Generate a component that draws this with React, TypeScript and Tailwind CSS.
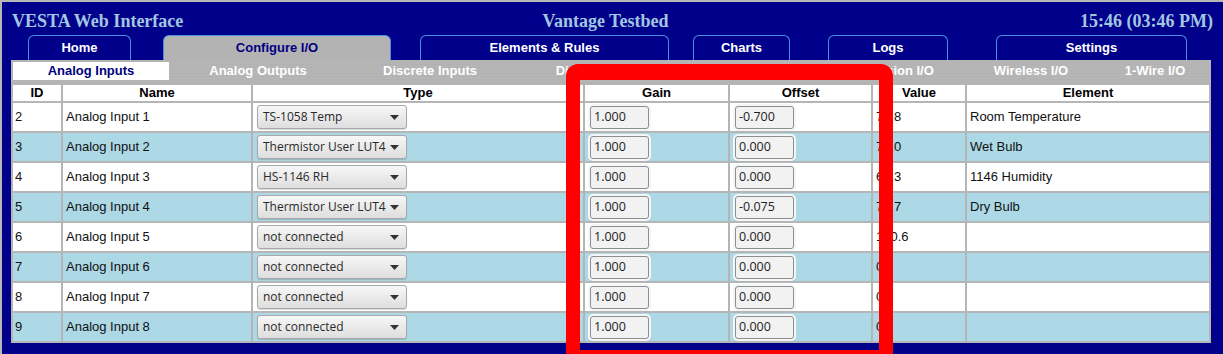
import React from "react";

const tabs = [
  { label: "Home", ml: "ml-[26px]", w: "w-[103px]" },
  { label: "Configure I/O", ml: "ml-[32px]", w: "w-[228px]", active: true },
  { label: "Elements & Rules", ml: "ml-[29px]", w: "w-[249px]" },
  { label: "Charts", ml: "ml-[24px]", w: "w-[97px]" },
  { label: "Logs", ml: "ml-[38px]", w: "w-[120px]" },
  { label: "Settings", ml: "ml-[48px]", w: "w-[191px]" },
];

const subTabs = [
  { label: "Analog Inputs", w: "w-[156px]", active: true },
  { label: "Analog Outputs", w: "w-[178px]" },
  { label: "Discrete Inputs", w: "w-[166px]" },
  { label: "Discrete Outputs", w: "w-[190px]" },
  { label: "Counter Inputs", w: "w-[117px]" },
  { label: "Expansion I/O", w: "w-[141px]" },
  { label: "Wireless I/O", w: "w-[140px]" },
  { label: "1-Wire I/O", w: "w-[108px]" },
];

const rows = [
  { id: 2, name: "Analog Input 1", type: "TS-1058 Temp", gain: "1.000", offset: "-0.700", value: "73.8", element: "Room Temperature" },
  { id: 3, name: "Analog Input 2", type: "Thermistor User LUT4", gain: "1.000", offset: "0.000", value: "71.0", element: "Wet Bulb" },
  { id: 4, name: "Analog Input 3", type: "HS-1146 RH", gain: "1.000", offset: "0.000", value: "63.3", element: "1146 Humidity" },
  { id: 5, name: "Analog Input 4", type: "Thermistor User LUT4", gain: "1.000", offset: "-0.075", value: "72.7", element: "Dry Bulb" },
  { id: 6, name: "Analog Input 5", type: "not connected", gain: "1.000", offset: "0.000", value: "100.6", element: "" },
  { id: 7, name: "Analog Input 6", type: "not connected", gain: "1.000", offset: "0.000", value: "0", element: "" },
  { id: 8, name: "Analog Input 7", type: "not connected", gain: "1.000", offset: "0.000", value: "0", element: "" },
  { id: 9, name: "Analog Input 8", type: "not connected", gain: "1.000", offset: "0.000", value: "0", element: "" },
];

const cols = "grid grid-cols-[48px_188px_330px_143px_141px_92px_242px] gap-[2px]";

const Select = ({ value }: { value: string }) => (
  <div className="w-[150px] h-[24px] ml-[4px] flex items-center justify-between pl-[5px] pr-[7px] rounded-[3px] border border-[#a8a8a8] bg-[linear-gradient(#f7f7f7,#dedede)] shadow-[0_1px_1px_rgba(0,0,0,0.15)] font-['Open_Sans',sans-serif] text-[12px] text-[#2a2a2a]">
    <span className="whitespace-nowrap">{value}</span>
    <svg width="9" height="5" viewBox="0 0 9 5" className="shrink-0">
      <path d="M0 0h9L4.5 5z" fill="#333" />
    </svg>
  </div>
);

const Input = ({ value }: { value: string }) => (
  <div className="w-[59px] h-[23px] ml-[5px] flex items-center pl-[3px] rounded-[3px] border border-[#8e8e8e] bg-[#f2f2f2] ring-2 ring-[#f4f7f8] font-['Open_Sans',sans-serif] text-[12.5px] text-[#222]">
    {value}
  </div>
);

export default function App() {
  return (
    <div className="w-[1223px] h-[354px] overflow-hidden relative bg-[#00008b] border-t-2 border-l-2 border-[#b8b8b8] font-['Liberation_Sans',Arial,sans-serif]">
      <div className="h-[33px] grid grid-cols-3 items-center pl-[10px] pr-[10px] pt-[5px] font-['Liberation_Serif',serif] font-bold text-[18px] text-[#a3c6e2]">
        <span>VESTA Web Interface</span>
        <span className="text-center pr-[14px]">Vantage Testbed</span>
        <span className="text-right">15:46 (03:46 PM)</span>
      </div>
      <div className="flex h-[25px]">
        {tabs.map((t) => (
          <div
            key={t.label}
            className={`${t.ml} ${t.w} h-[25px] flex items-center justify-center rounded-t-[6px] border border-b-0 border-[#4a8fdc] text-[13px] font-bold ${
              t.active ? "bg-[#b3b3b3] text-[#000080]" : "text-white"
            }`}
          >
            {t.label}
          </div>
        ))}
      </div>
      <div className="ml-[9px] w-[1200px] h-[283px] px-[2px] pt-[2px] bg-[repeating-linear-gradient(0deg,#b1b1b1_0px,#bbbbbb_1px,#afafaf_2px,#b6b6b6_3px)]">
        <div className="flex h-[18px] items-center">
          {subTabs.map((s) => (
            <div
              key={s.label}
              className={`${s.w} h-[18px] flex items-center justify-center text-[13px] font-bold whitespace-nowrap ${
                s.active ? "bg-white text-[#000080]" : "text-white"
              }`}
            >
              {s.label}
            </div>
          ))}
        </div>
        <div className={`${cols} mt-[5px] text-[13px] text-black`}>
          {["ID", "Name", "Type", "Gain", "Offset", "Value", "Element"].map((h) => (
            <div key={h} className="h-[16px] bg-white flex items-center justify-center font-bold">
              {h}
            </div>
          ))}
        </div>
        <div className="flex flex-col gap-[2px] mt-[2px]">
          {rows.map((r, i) => {
            const bg = i % 2 === 0 ? "bg-white" : "bg-[#add8e6]";
            const cell = `${bg} h-[28px] flex items-center`;
            return (
              <div key={r.id} className={`${cols} text-[13px] text-[#111]`}>
                <div className={`${cell} pl-[2px]`}>{r.id}</div>
                <div className={`${cell} pl-[3px]`}>{r.name}</div>
                <div className={cell}>
                  <Select value={r.type} />
                </div>
                <div className={cell}>
                  <Input value={r.gain} />
                </div>
                <div className={cell}>
                  <Input value={r.offset} />
                </div>
                <div className={`${cell} pl-[3px]`}>{r.value}</div>
                <div className={`${cell} pl-[3px]`}>{r.element}</div>
              </div>
            );
          })}
        </div>
      </div>
      <div className="absolute left-[564px] top-[62px] w-[327px] h-[300px] border-[14px] border-t-[16px] border-[#ff0000] rounded-[12px]" />
    </div>
  );
}
